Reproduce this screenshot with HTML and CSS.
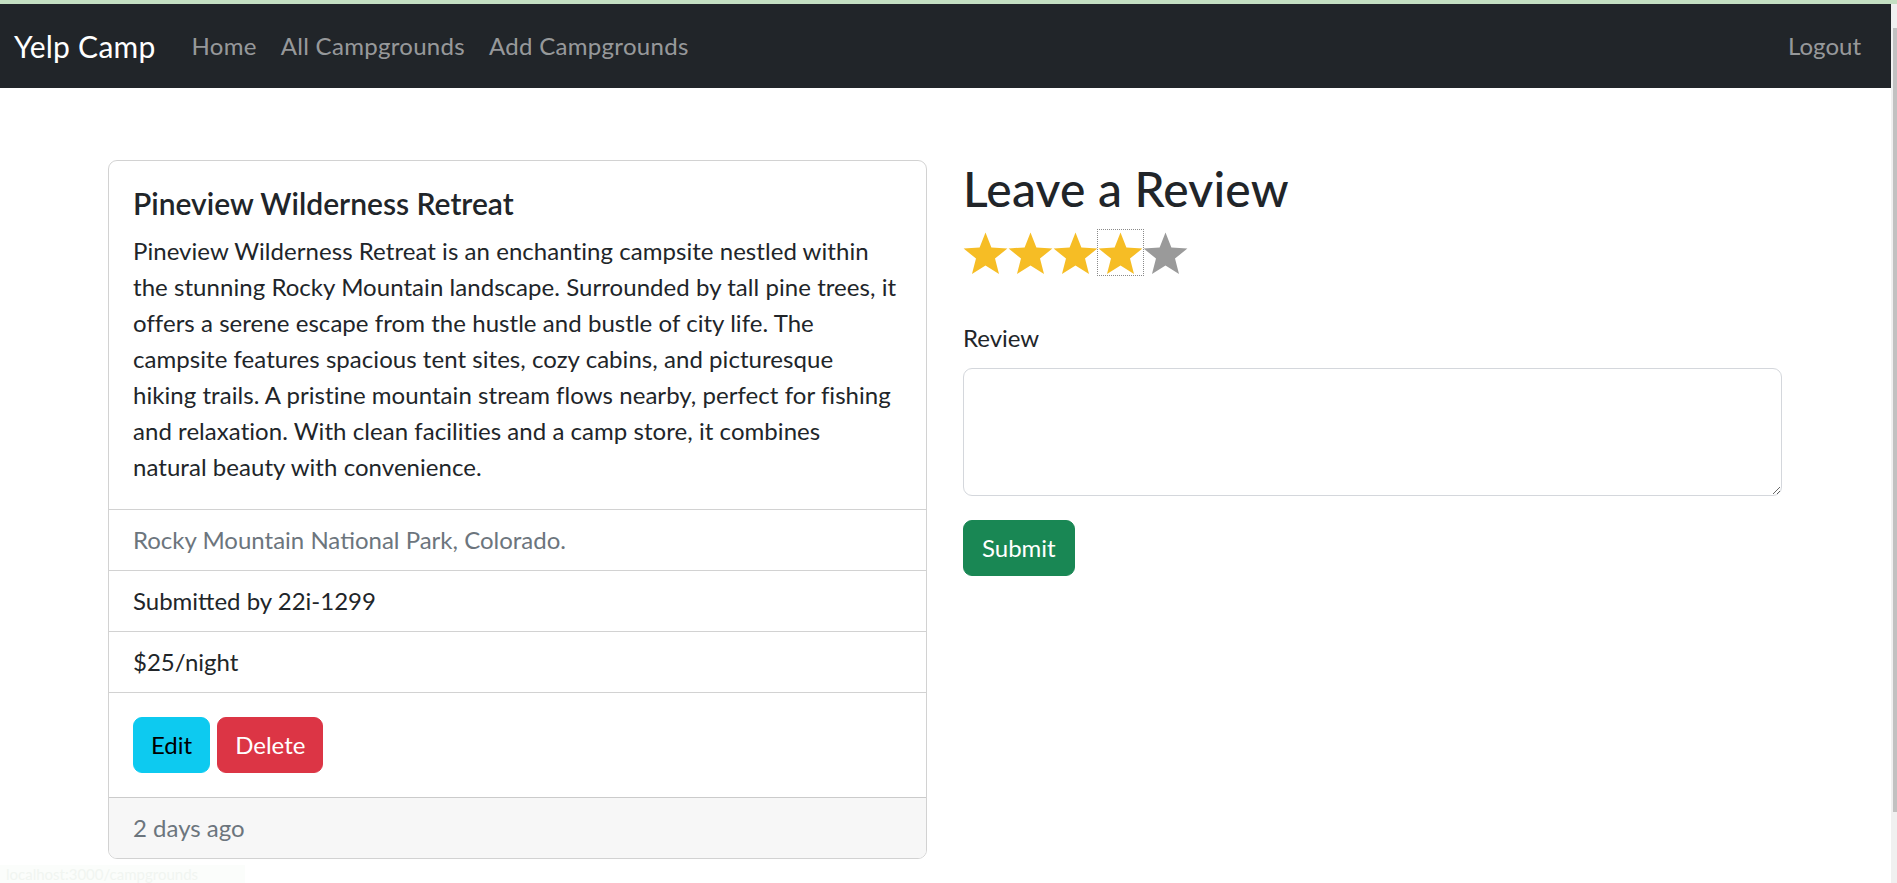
FILE: index.html
```html
<!DOCTYPE html>
<html lang="en">
<head>
<meta charset="utf-8">
<title>Yelp Camp</title>
<link rel="stylesheet" href="styles.css">
</head>
<body>
<div class="topline"></div>
<div class="page">
  <div class="main">
    <nav class="navbar">
      <a class="brand" href="#">Yelp Camp</a>
      <a class="nav-link" href="#">Home</a>
      <a class="nav-link" href="#">All Campgrounds</a>
      <a class="nav-link" href="#">Add Campgrounds</a>
      <a class="nav-link logout" href="#">Logout</a>
    </nav>
    <div class="container">
      <div class="card">
        <div class="card-body">
          <h5 class="card-title">Pineview Wilderness Retreat</h5>
          <p class="card-text">Pineview Wilderness Retreat is an enchanting campsite nestled within<br>the stunning Rocky Mountain landscape. Surrounded by tall pine trees, it<br>offers a serene escape from the hustle and bustle of city life. The<br>campsite features spacious tent sites, cozy cabins, and picturesque<br>hiking trails. A pristine mountain stream flows nearby, perfect for fishing<br>and relaxation. With clean facilities and a camp store, it combines<br>natural beauty with convenience.</p>
        </div>
        <ul class="list-group">
          <li class="list-item muted">Rocky Mountain National Park, Colorado.</li>
          <li class="list-item">Submitted by 22i-1299</li>
          <li class="list-item">$25/night</li>
        </ul>
        <div class="card-body actions">
          <a class="btn btn-info" href="#">Edit</a>
          <button class="btn btn-danger">Delete</button>
        </div>
        <div class="card-footer">2 days ago</div>
      </div>
      <div class="review">
        <h2 class="review-title">Leave a Review</h2>
        <fieldset class="stars">
          <span class="star on"><svg viewBox="0 0 45 45"><use href="#star"/></svg></span>
          <span class="star on"><svg viewBox="0 0 45 45"><use href="#star"/></svg></span>
          <span class="star on"><svg viewBox="0 0 45 45"><use href="#star"/></svg></span>
          <span class="star on focus"><svg viewBox="0 0 45 45"><use href="#star"/></svg></span>
          <span class="star off"><svg viewBox="0 0 45 45"><use href="#star"/></svg></span>
        </fieldset>
        <label class="form-label" for="body">Review</label>
        <textarea class="form-control" id="body" rows="3"></textarea>
        <button class="btn btn-success">Submit</button>
      </div>
    </div>
  </div>
  <div class="scrollbar"><div class="thumb"></div></div>
</div>
<div class="status">localhost:3000/campgrounds</div>
<svg width="0" height="0" class="defs">
  <symbol id="star" viewBox="0 0 45 45">
    <polygon points="22.5,2.5 28.38,17.41 44.38,18.39 32.01,28.59 36.02,44.11 22.5,35.5 8.98,44.11 12.99,28.59 0.62,18.39 16.62,17.41"/>
  </symbol>
</svg>
</body>
</html>
```
FILE: styles.css
```css
html, body {
  margin: 0;
  padding: 0;
  height: 100%;
  overflow: hidden;
}
body {
  font-family: Lato, "Liberation Sans", sans-serif;
  font-size: 24px;
  line-height: 36px;
  color: #212529;
  background: #fff;
}
.topline {
  height: 4px;
  background: #c4dfc2;
}
.page {
  display: flex;
  height: calc(100% - 4px);
}
.main {
  flex: 1;
  min-width: 0;
}
.scrollbar {
  width: 6px;
  background: #f0f0f0;
}
.thumb {
  width: 4px;
  margin: 24px 0 0 2px;
  height: 784px;
  background: #c1c1c1;
}
.navbar {
  display: flex;
  align-items: center;
  background: #212529;
  padding: 12px 18px 12px 14px;
}
.brand {
  font-size: 30px;
  line-height: 45px;
  padding: 7.5px 0;
  margin-right: 24px;
  color: #fff;
  text-decoration: none;
  letter-spacing: 0.25px;
}
.nav-link {
  padding: 12px;
  color: rgba(255, 255, 255, 0.55);
  text-decoration: none;
  letter-spacing: 0.3px;
}
.logout {
  margin-left: auto;
  letter-spacing: 0;
}
.container {
  width: 1674px;
  margin: 72px 0 0 90px;
  padding: 0 18px;
  display: grid;
  grid-template-columns: 819px 819px;
  column-gap: 36px;
  align-items: start;
}
.card {
  border: 1px solid rgba(0, 0, 0, 0.175);
  border-radius: 9px;
  overflow: hidden;
}
.card-body {
  padding: 24px;
}
.card-title {
  font-size: 30px;
  font-weight: 600;
  line-height: 36px;
  margin: 0 0 12px;
}
.card-text {
  margin: 0;
  white-space: nowrap;
  letter-spacing: 0.05px;
}
.list-group {
  list-style: none;
  margin: 0;
  padding: 0;
  border-top: 1px solid rgba(0, 0, 0, 0.175);
  border-bottom: 1px solid rgba(0, 0, 0, 0.175);
}
.list-item {
  padding: 12px 24px;
}
.list-item + .list-item {
  border-top: 1px solid rgba(0, 0, 0, 0.175);
}
.muted {
  color: #6c757d;
}
.actions {
  display: flex;
  gap: 7px;
}
.btn {
  display: inline-block;
  font-family: inherit;
  font-size: 24px;
  line-height: 36px;
  padding: 9px 18px;
  border: 1px solid transparent;
  border-radius: 9px;
  text-decoration: none;
  cursor: pointer;
}
.btn-info {
  background: #0dcaf0;
  border-color: #0dcaf0;
  color: #000;
  padding: 9px 17px;
}
.btn-danger {
  background: #dc3545;
  border-color: #dc3545;
  color: #fff;
  padding: 9px 17px;
}
.btn-success {
  background: #198754;
  border-color: #198754;
  color: #fff;
}
.card-footer {
  background: #f7f7f7;
  border-top: 1px solid rgba(0, 0, 0, 0.175);
  padding: 12px 24px;
  color: #6c757d;
}
.review-title {
  font-size: 48px;
  font-weight: 500;
  line-height: 57.6px;
  margin: 0 0 12px;
  letter-spacing: 0.2px;
}
.stars {
  display: flex;
  align-items: flex-start;
  height: 90px;
  margin: 0;
  padding: 0;
  border: 0;
  box-sizing: border-box;
}
.star {
  width: 45px;
  height: 45px;
  display: block;
}
.star svg {
  width: 45px;
  height: 45px;
  display: block;
}
.on svg {
  fill: #f6bd25;
}
.off svg {
  fill: #9a9a9a;
}
.focus {
  outline: 1px dotted #8a8a8a;
}
.form-label {
  display: block;
  margin-bottom: 12px;
}
.form-control {
  display: block;
  width: 100%;
  height: 128px;
  box-sizing: border-box;
  padding: 9px 18px;
  font-family: inherit;
  font-size: 24px;
  line-height: 36px;
  border: 1px solid #d4d7dc;
  border-radius: 9px;
  margin: 0 0 24px;
  resize: vertical;
}
.defs {
  position: absolute;
  width: 0;
  height: 0;
}
.status {
  position: fixed;
  left: 0;
  bottom: 0;
  width: 239px;
  height: 18px;
  padding-left: 6px;
  overflow: hidden;
  background: #fbfdfb;
  color: #f1f5f1;
  font-size: 15px;
  line-height: 18px;
}
```
